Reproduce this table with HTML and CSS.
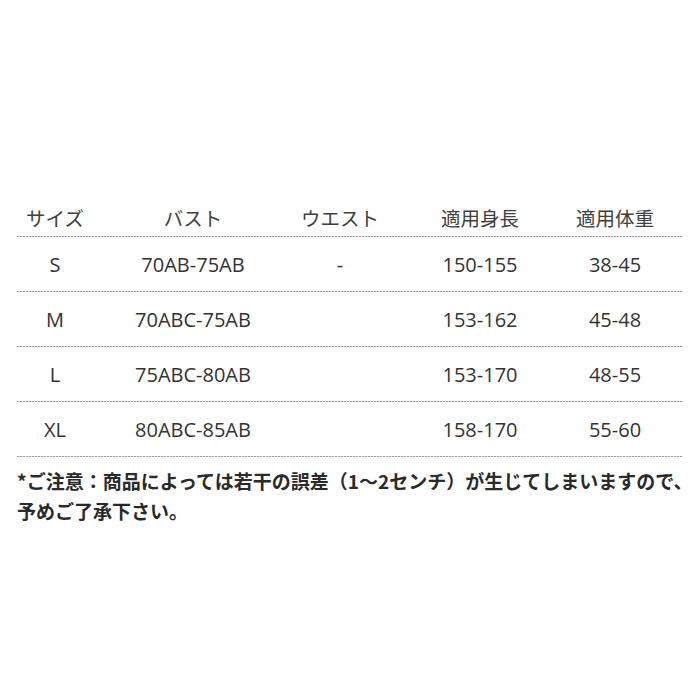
FILE: index.html
```html
<!DOCTYPE html>
<html lang="ja">
<head>
<meta charset="utf-8">
<link rel="stylesheet" href="styles.css">
</head>
<body>
<div class="sheet">
  <div class="table">
    <div class="row head">
      <div>サイズ</div><div>バスト</div><div>ウエスト</div><div>適用身長</div><div>適用体重</div>
    </div>
    <div class="rule"></div>
    <div class="row">
      <div>S</div><div>70AB-75AB</div><div>-</div><div>150-155</div><div>38-45</div>
    </div>
    <div class="rule"></div>
    <div class="row">
      <div>M</div><div>70ABC-75AB</div><div></div><div>153-162</div><div>45-48</div>
    </div>
    <div class="rule"></div>
    <div class="row">
      <div>L</div><div>75ABC-80AB</div><div></div><div>153-170</div><div>48-55</div>
    </div>
    <div class="rule"></div>
    <div class="row">
      <div>XL</div><div>80ABC-85AB</div><div></div><div>158-170</div><div>55-60</div>
    </div>
    <div class="rule"></div>
  </div>
  <p class="note">*ご注意：商品によっては若干の誤差（1〜2センチ）が生じてしまいますので、<br>予めご了承下さい。</p>
</div>
</body>
</html>
```
FILE: styles.css
```css
html, body {
  margin: 0;
  padding: 0;
  background: #ffffff;
}
body {
  width: 700px;
  height: 700px;
  overflow: hidden;
  font-family: "Open Sans", "Noto Sans CJK JP", sans-serif;
  color: #333333;
}
.sheet {
  padding: 198px 17px 0 17px;
}
.table {
  width: 666px;
}
.row {
  display: grid;
  grid-template-columns: 76px 200px 94px 186px 84px;
  height: 54px;
  align-items: center;
  text-align: center;
  font-size: 20px;
}
.row.head {
  height: 38px;
  font-family: "Noto Sans CJK JP", sans-serif;
  font-size: 19.5px;
  font-weight: 400;
  color: #404040;
}
.rule {
  height: 1px;
  background: repeating-linear-gradient(90deg, #9a9a9a 0 2px, #e2e2e2 2px 3px);
}
.note {
  margin: 9px 0 0 0;
  font-family: "Noto Sans CJK JP", sans-serif;
  font-size: 19px;
  font-weight: 700;
  line-height: 30px;
  color: #2a2a2a;
  white-space: nowrap;
}
```
